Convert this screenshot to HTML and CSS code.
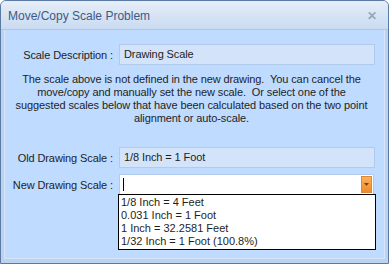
FILE: index.html
```html
<!DOCTYPE html>
<html lang="en">
<head>
    <meta charset="UTF-8">
    <title>Move/Copy Scale Problem</title>
    <link rel="stylesheet" href="styles.css">
</head>
<body>
    <div class="window">
        <div class="titlebar">
            <span class="title">Move/Copy Scale Problem</span>
            <span class="close">&#x2715;</span>
        </div>
        <div class="frame">
            <div class="content">
                <div class="row row-desc">
                    <label class="label">Scale Description :</label>
                    <div class="field">Drawing Scale</div>
                </div>

                <p class="message">
                    The scale above is not defined in the new drawing.&nbsp; You can cancel the<br>
                    move/copy and manually set the new scale.&nbsp; Or select one of the<br>
                    suggested scales below that have been calculated based on the two point<br>
                    alignment or auto-scale.
                </p>

                <div class="row row-old">
                    <label class="label">Old Drawing Scale :</label>
                    <div class="field">1/8 Inch = 1 Foot</div>
                </div>

                <div class="row row-new">
                    <label class="label">New Drawing Scale :</label>
                    <div class="combo">
                        <div class="combo-input"><span class="caret"></span></div>
                        <div class="combo-btn">
                            <svg width="5" height="3" viewBox="0 0 5 3"><path d="M0 0h5L2.5 3z" fill="#6b4a2a"/></svg>
                        </div>
                        <ul class="combo-list">
                            <li>1/8 Inch = 4 Feet</li>
                            <li>0.031 Inch = 1 Foot</li>
                            <li>1 Inch = 32.2581 Feet</li>
                            <li>1/32 Inch = 1 Foot (100.8%)</li>
                        </ul>
                    </div>
                </div>

                <div class="buttons">
                    <span class="btn-edge"></span>
                    <span class="btn-edge"></span>
                </div>
            </div>
        </div>
    </div>
</body>
</html>
```

FILE: styles.css
```css
body {
    margin: 0;
    font-family: "Liberation Sans", Arial, sans-serif;
    font-size: 11px;
    background: #ffffff;
}

.window {
    width: 389px;
    height: 264px;
    box-sizing: border-box;
    border: 1px solid #5a7aa4;
    border-radius: 6px 6px 0 0;
    background: #bcd3ef;
    display: flex;
    flex-direction: column;
    overflow: hidden;
}

.titlebar {
    height: 27px;
    flex: none;
    display: flex;
    align-items: center;
    justify-content: space-between;
    padding: 1px 11px 0 7px;
    background: linear-gradient(to bottom, #e6eef8, #d4e2f4 60%, #cadbf1);
    border-bottom: 1px solid #aec7e8;
    color: #3d5a86;
    font-size: 12px;
}

.close {
    color: #98a6b8;
    font-size: 12px;
    font-weight: bold;
}

.frame {
    flex: 1;
    padding: 0 3px 4px 3px;
    display: flex;
}

.content {
    flex: 1;
    background: #bfdbff;
    border: 1px solid #d6e6fa;
    border-top: none;
    position: relative;
    color: #1e1e1e;
    letter-spacing: -0.1px;
}

.row {
    display: grid;
    grid-template-columns: 108px 256px;
    column-gap: 6px;
    align-items: center;
}

.row-desc {
    margin-top: 14px;
}

.label {
    text-align: right;
}

.field {
    box-sizing: border-box;
    height: 21px;
    line-height: 19px;
    padding: 0 4px;
    background: #d3e4fa;
    border: 1px solid #b3cbea;
}

.message {
    margin: 8px 0 0 0;
    padding-right: 6px;
    text-align: center;
    line-height: 13px;
    white-space: nowrap;
}

.row-old {
    margin-top: 22px;
}

.row-new {
    margin-top: 6px;
}

.combo {
    position: relative;
    height: 21px;
    display: flex;
    align-items: center;
    background: #ffffff;
    border: 1px solid #b3cbea;
    box-sizing: border-box;
    margin-right: 1px;
}

.combo-input {
    flex: 1;
    height: 100%;
    display: flex;
    align-items: center;
    padding-left: 3px;
}

.caret {
    width: 1px;
    height: 13px;
    background: #000000;
}

.combo-btn {
    width: 11px;
    height: 17px;
    margin-right: 1px;
    display: flex;
    align-items: center;
    justify-content: center;
    background: linear-gradient(to bottom, #f9b25b, #f08a2a);
    border: 1px solid #e0883a;
    box-sizing: border-box;
}

.combo-list {
    position: absolute;
    left: -2px;
    top: 19px;
    width: 258px;
    margin: 0;
    padding: 1px 0;
    list-style: none;
    background: #ffffff;
    border: 1px solid #000000;
    box-sizing: border-box;
    line-height: 13px;
    letter-spacing: 0;
    z-index: 2;
}

.combo-list li {
    padding-left: 2px;
}

.buttons {
    display: flex;
    justify-content: flex-end;
    gap: 6px;
    margin: 48px 89px 0 0;
}

.btn-edge {
    width: 73px;
    height: 2px;
    border-bottom: 1px solid #d7e6f8;
    border-radius: 0 0 3px 3px;
}
```
